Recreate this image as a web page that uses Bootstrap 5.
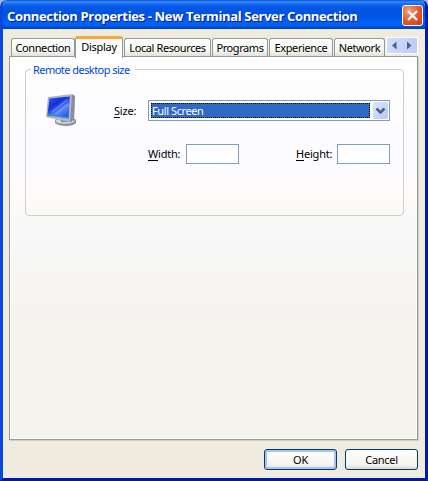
<!DOCTYPE html>
<html lang="en">
<head>
<meta charset="utf-8">
<title>Connection Properties</title>
<link rel="stylesheet" href="https://cdn.jsdelivr.net/npm/bootstrap@5.3.0/dist/css/bootstrap.min.css">
<style>
body{width:428px;height:481px;overflow:hidden;background:#9bb5e6;font:11px/14px "Noto Sans","DejaVu Sans",sans-serif;color:#000;letter-spacing:-.4px}
.win{width:428px;height:481px;background:#efebdf;border:solid #0a48dc;border-width:0 3px 3px;border-right-color:#0019a8;border-bottom-color:#0019a8;border-radius:7px 7px 0 0;overflow:hidden}
.titlebar{height:29px;margin:0 -3px;padding:3px 5px 0 7px;background:linear-gradient(#0852d8 0,#3c8cf8 2px,#1468f0 4px,#0256e4 8px,#0054e3 16px,#0062fa 23px,#0060f8 25px,#0048c8 28px,#0038b0 29px)}
.caption{font:bold 13px/26px "Open Sans","Noto Sans",sans-serif;color:#fff;text-shadow:1px 1px #0a1883;letter-spacing:-.35px}
.xbtn{width:21px;height:21px;margin-top:2px;border:1px solid #fff;border-radius:3px;background:radial-gradient(circle at 30% 25%,#f0a080,#e25a35 50%,#c83c14)}
.face{padding:7px 7px 0 6px}
.tabs{height:21px;padding-left:2px;position:relative;z-index:1}
.tb{height:18px;margin-top:2px;border:1px solid #919b9c;border-bottom:0;border-radius:3px 3px 0 0;background:linear-gradient(#fff,#f5f5f1 70%,#e2e0d8);text-align:center;line-height:18px;flex:none;letter-spacing:-.4px}
.tb.on{height:22px;margin-top:0;border-top:3px solid #f5a93a;background:#fefefe;line-height:15px;letter-spacing:-.3px}
.w-conn{width:64px}.w-disp{width:48px}.w-local{width:87px}.w-prog{width:56px}.w-exp{width:64px}.w-net{width:51px}
.gap-tab{margin-left:1px}
.spin{width:32px;height:17px;margin:1px 0 0 1px;border:1px solid #fff;background:linear-gradient(90deg,#cfdcfd,#bdcdf8)}
.pane{height:384px;margin-top:-1px;border:1px solid #919b9c;box-shadow:1px 1px #d0cec0,inset 1px 0 #fff,inset -1px -1px #fff;background:linear-gradient(#fff,#fcfbff 20%,#fcfbff 30%,#fefbf8 36%,#f8f8f9 45%,#f5f3ee 70%,#f5f3ee);padding:12px 13px 0 15px}
.box{height:147px;border:1px solid #d0d0bf;border-radius:4px}
.legend-txt{height:14px;margin:-7px 0 0 5px;padding:0 2px;background:#fefeff;color:#0046d5;width:104px;letter-spacing:-.54px}
.size-row{padding:17px 0 0 20px}
.form-col{margin:6px 0 0 36px}
.wh-row{margin:23px 0 0 34px}
.lb-size{width:34px}.lb-w{width:38px}.lb-h{width:41px;margin-left:57px}
.lb-size,.lb-w,.lb-h{letter-spacing:-.2px}
.fld{border:1px solid #7f9db9;background:#fff}
.combo{width:242px;height:21px;padding:2px 1px 2px 2px}
.sel{height:15px;background:#316ac5;color:#fff;outline:1px dotted #000;outline-offset:-1px;line-height:16px;padding-left:1px;margin-right:3px}
.arrow{width:15px;height:17px;margin-top:-1px;border-radius:2px;background:linear-gradient(135deg,#dce6ff,#b4c7f4)}
.inp{width:53px;height:20px}
.cmds{gap:8px;margin-top:9px}
.pb{width:73px;height:21px;border:1px solid #003c74;border-radius:3px;background:linear-gradient(#fff,#f4f3ee 80%,#dcd7cb);text-align:center;line-height:20px;padding:0;font-size:11px;letter-spacing:-.3px}
.pb.def{box-shadow:inset 0 0 0 2px #a9c3f0}
u{text-underline-offset:2px;text-decoration-skip-ink:none}
svg{display:block}
</style>
</head>
<body>
<div class="win">
 <div class="titlebar d-flex justify-content-between">
  <div class="caption text-nowrap">Connection Properties - New Terminal Server Connection</div>
  <div class="xbtn d-flex align-items-center justify-content-center"><svg width="13" height="13"><path d="M2 2L11 11M11 2L2 11" stroke="#fff" stroke-width="2.2"/></svg></div>
 </div>
 <div class="face">
  <div class="tabs d-flex text-nowrap">
   <div class="tb w-conn">Connection</div>
   <div class="tb on w-disp">Display</div>
   <div class="tb gap-tab w-local">Local Resources</div>
   <div class="tb gap-tab w-prog">Programs</div>
   <div class="tb gap-tab w-exp">Experience</div>
   <div class="tb gap-tab w-net">Network</div>
   <div class="spin flex-shrink-0"><svg width="30" height="15"><path d="M9.500 3.500V11.500L5 7.500zM20 3.500V11.500L24.500 7.500z" fill="#4d6185"/></svg></div>
  </div>
  <div class="pane">
   <div class="box">
    <div class="legend-txt text-nowrap">Remote desktop size</div>
    <div class="size-row d-flex">
     <svg width="32" height="33" viewBox="0 0 32 33">
      <defs><linearGradient id="scr" x1="0" y1="0" x2=".7" y2="1"><stop offset="0" stop-color="#3a5ce6"/><stop offset=".4" stop-color="#1030d8"/><stop offset=".7" stop-color="#5c88f4"/><stop offset="1" stop-color="#2458e0"/></linearGradient>
      <linearGradient id="bez"><stop offset="0" stop-color="#a8b0cc"/><stop offset="1" stop-color="#b4b8c8"/></linearGradient></defs>
      <path d="M9 26C9 24 28 23 30 26V29C27 33 13 33 9 29z" fill="#8d91a0"/><ellipse cx="19" cy="27" rx="9.500" ry="2.800" fill="#d4d6dc"/>
      <path d="M14 23H25L26 28H15z" fill="#868b9b"/>
      <path d="M2 3L26 0L29 2L28 26L24 28L0 23z" fill="url(#bez)"/>
      <path d="M26 0.500L29 2L28 26L24 28z" fill="#898e9f"/>
      <path d="M3.500 4.500L24 2.500L22.500 24.500L1.500 21z" fill="url(#scr)"/>
      <path d="M6 18L21 6M10 20L22 10" stroke="#8fa9fa" stroke-width="1.200" opacity=".55"/>
      <path d="M1.500 20L6 20.700V22.500L1.500 22z" fill="#27a770"/><path d="M6 21L22.500 23V24.500L6 22z" fill="#338bd6"/>
     </svg>
     <div class="form-col">
      <div class="d-flex align-items-center">
       <label class="lb-size text-nowrap"><u>S</u>ize:</label>
       <div class="fld combo d-flex"><div class="sel flex-grow-1">Full Screen</div><div class="arrow"><svg width="15" height="17"><path d="M3.500 6.500L7.500 10.500L11.500 6.500" fill="none" stroke="#4d6185" stroke-width="2.500"/></svg></div></div>
      </div>
      <div class="wh-row d-flex align-items-center">
       <label class="lb-w text-nowrap"><u>W</u>idth:</label><div class="fld inp"></div>
       <label class="lb-h text-nowrap"><u>H</u>eight:</label><div class="fld inp"></div>
      </div>
     </div>
    </div>
   </div>
  </div>
  <div class="cmds d-flex justify-content-end">
   <button class="pb def">OK</button><button class="pb">Cancel</button>
  </div>
 </div>
</div>
<script src="https://cdn.jsdelivr.net/npm/bootstrap@5.3.0/dist/js/bootstrap.bundle.min.js"></script>
</body>
</html>
